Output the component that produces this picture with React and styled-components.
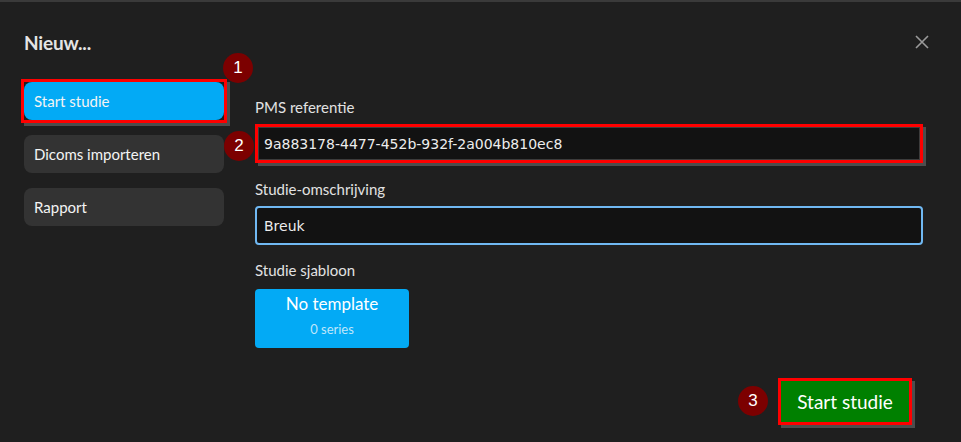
import React from "react";
import styled, { createGlobalStyle } from "styled-components";

const Global = createGlobalStyle`
  html, body {
    margin: 0;
    padding: 0;
    background: #1f1f1f;
  }
  * {
    box-sizing: border-box;
  }
`;

const Dialog = styled.div`
  position: relative;
  width: 961px;
  height: 442px;
  background: #1f1f1f;
  border-top: 2px solid #3a3a3a;
  font-family: Lato, "Open Sans", sans-serif;
  color: #e8e8e8;
  padding: 30px 24px 0 24px;
`;

const Header = styled.div`
  display: flex;
  justify-content: space-between;
  align-items: center;
  height: 20px;
`;

const Title = styled.h1`
  margin: 0;
  font-size: 19px;
  font-weight: 700;
  letter-spacing: -0.2px;
  color: #e4e4e4;
`;

const Close = styled.button`
  background: none;
  border: 0;
  padding: 0;
  margin-right: 7px;
  width: 16px;
  height: 16px;
  display: flex;
  cursor: pointer;
`;

const Body = styled.div`
  display: grid;
  grid-template-columns: 200px 1fr;
  column-gap: 31px;
  margin-top: 30px;
  padding-right: 14px;
`;

const Nav = styled.nav`
  display: flex;
  flex-direction: column;
  gap: 15px;
`;

const NavButton = styled.button`
  height: 38px;
  width: 200px;
  border: 0;
  border-radius: 8px;
  background: ${(p) => (p.$active ? "#03aaf5" : "#333333")};
  color: #f4f4f4;
  font-family: inherit;
  font-size: 15px;
  text-align: left;
  padding: 0 10px;
  cursor: pointer;
`;

const Mark = styled.div`
  position: relative;
  border: 3px solid #ff0000;
  margin: ${(p) => (p.$flush ? "0" : "-3px")};
  box-shadow: 3px 3px 0 #4d4d4d;
  display: ${(p) => (p.$inline ? "inline-flex" : "flex")};
`;

const Badge = styled.span`
  position: absolute;
  width: 30px;
  height: 30px;
  border-radius: 50%;
  background: #7c0000;
  color: #ffffff;
  font-family: "Liberation Sans", Arial, sans-serif;
  font-size: 17px;
  display: flex;
  align-items: center;
  justify-content: center;
  z-index: 2;
`;

const Form = styled.div`
  display: flex;
  flex-direction: column;
  padding-top: 16px;
`;

const Label = styled.label`
  font-size: 15px;
  color: #e2e2e2;
  margin-bottom: ${(p) => (p.$gap ? `${p.$gap}px` : "8px")};
  display: block;
`;

const Field = styled.div`
  margin-bottom: ${(p) => (p.$space ? `${p.$space}px` : "16px")};
`;

const Input = styled.input`
  width: 100%;
  height: ${(p) => (p.$marked ? "33px" : "39px")};
  background: #121212;
  border: ${(p) => (p.$focus ? "2px solid #70b8f2" : "1px solid #3c3c3c")};
  border-radius: ${(p) => (p.$marked ? "0" : "4px")};
  color: #ededed;
  font-family: "DejaVu Sans", Tahoma, sans-serif;
  font-size: 14px;
  padding: 0 ${(p) => (p.$marked ? "5px" : "7px")};
  outline: none;
`;

const Template = styled.button`
  width: 154px;
  height: 59px;
  background: #03aaf5;
  border: 0;
  border-radius: 4px;
  display: flex;
  flex-direction: column;
  align-items: center;
  justify-content: flex-start;
  padding-top: 6px;
  gap: 9px;
  font-family: inherit;
  cursor: pointer;
`;

const TemplateName = styled.span`
  color: #ffffff;
  font-size: 17px;
  line-height: 18px;
`;

const TemplateMeta = styled.span`
  color: #bfe6fb;
  font-size: 13px;
  line-height: 14px;
`;

const Footer = styled.div`
  display: flex;
  justify-content: flex-end;
  padding-right: 28px;
  margin-top: 17px;
`;

const Submit = styled.button`
  height: 41px;
  width: 128px;
  border: 0;
  background: #008000;
  color: #ffffff;
  font-family: inherit;
  font-size: 19px;
  cursor: pointer;
`;

function App() {
  return (
    <>
      <Global />
      <Dialog>
        <Header>
          <Title>Nieuw...</Title>
          <Close aria-label="Sluiten">
            <svg width="16" height="16" viewBox="0 0 16 16">
              <path d="M2 2 L14 14 M14 2 L2 14" stroke="#9a9a9a" strokeWidth="1.6" />
            </svg>
          </Close>
        </Header>
        <Body>
          <Nav>
            <Mark>
              <NavButton $active>Start studie</NavButton>
              <Badge style={{ right: -29, top: -29 }}>1</Badge>
            </Mark>
            <NavButton>Dicoms importeren</NavButton>
            <NavButton>Rapport</NavButton>
          </Nav>
          <Form>
            <Field $space={17}>
              <Label>PMS referentie</Label>
              <Mark $flush>
                <Input $marked defaultValue="9a883178-4477-452b-932f-2a004b810ec8" />
                <Badge style={{ left: -34, top: 4 }}>2</Badge>
              </Mark>
            </Field>
            <Field>
              <Label>Studie-omschrijving</Label>
              <Input $focus defaultValue="Breuk" spellCheck={false} />
            </Field>
            <Field>
              <Label $gap={10}>Studie sjabloon</Label>
              <Template>
                <TemplateName>No template</TemplateName>
                <TemplateMeta>0 series</TemplateMeta>
              </Template>
            </Field>
          </Form>
        </Body>
        <Footer>
          <Mark $inline>
            <Submit>Start studie</Submit>
            <Badge style={{ left: -43, top: 5 }}>3</Badge>
          </Mark>
        </Footer>
      </Dialog>
    </>
  );
}

export default App;
